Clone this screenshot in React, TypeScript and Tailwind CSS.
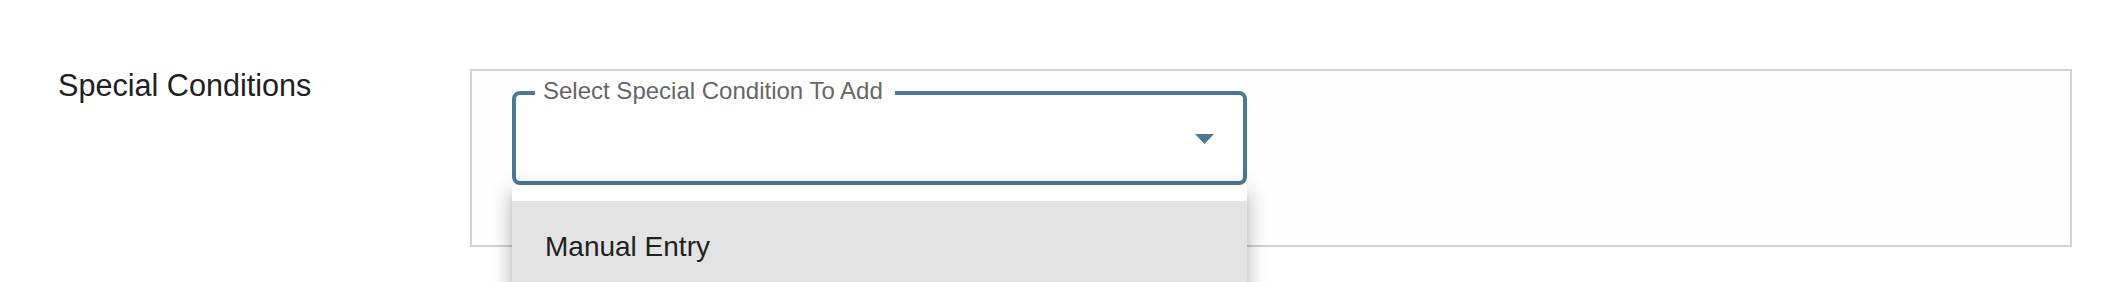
import React from "react";

export default function App() {
  return (
    <div className="w-[2102px] h-[282px] overflow-hidden bg-white flex items-start font-['Liberation_Sans',Arial,sans-serif]">
      <div className="w-[470px] shrink-0 pl-[58px] pt-[68px]">
        <div className="text-[30.6px] leading-[34px] text-[#212121]">Special Conditions</div>
      </div>
      <div className="mt-[69px] w-[1602px] h-[178px] shrink-0 border-2 border-[#d3d3d3] bg-[#fefefe] pt-[20px] pl-[40px]">
        <div className="relative w-[735px]">
          <div className="relative h-[94px] border-4 border-[#4d7797] rounded-[8px] bg-white flex items-center justify-end pr-[29px]">
            <span className="absolute left-[19px] top-[-16px] bg-white pl-2 pr-3 text-[24px] leading-[24px] text-[#666666]">
              Select Special Condition To Add
            </span>
            <svg width="19" height="10" viewBox="0 0 19 10" className="mt-[2px]">
              <polygon points="0,0 19,0 9.5,10" fill="#4d7797" />
            </svg>
          </div>
          <div className="absolute top-full left-0 w-full bg-white pt-[16px] shadow-[0px_8px_8px_-4px_rgba(0,0,0,0.2),0px_12px_15px_2px_rgba(0,0,0,0.14),0px_5px_21px_3px_rgba(0,0,0,0.12)]">
            <div className="bg-[#e3e3e3] pl-[33px] pt-[26px] pb-[26px] text-[28px] leading-[40px] text-[#1f1f1f]">
              Manual Entry
            </div>
          </div>
        </div>
      </div>
    </div>
  );
}
